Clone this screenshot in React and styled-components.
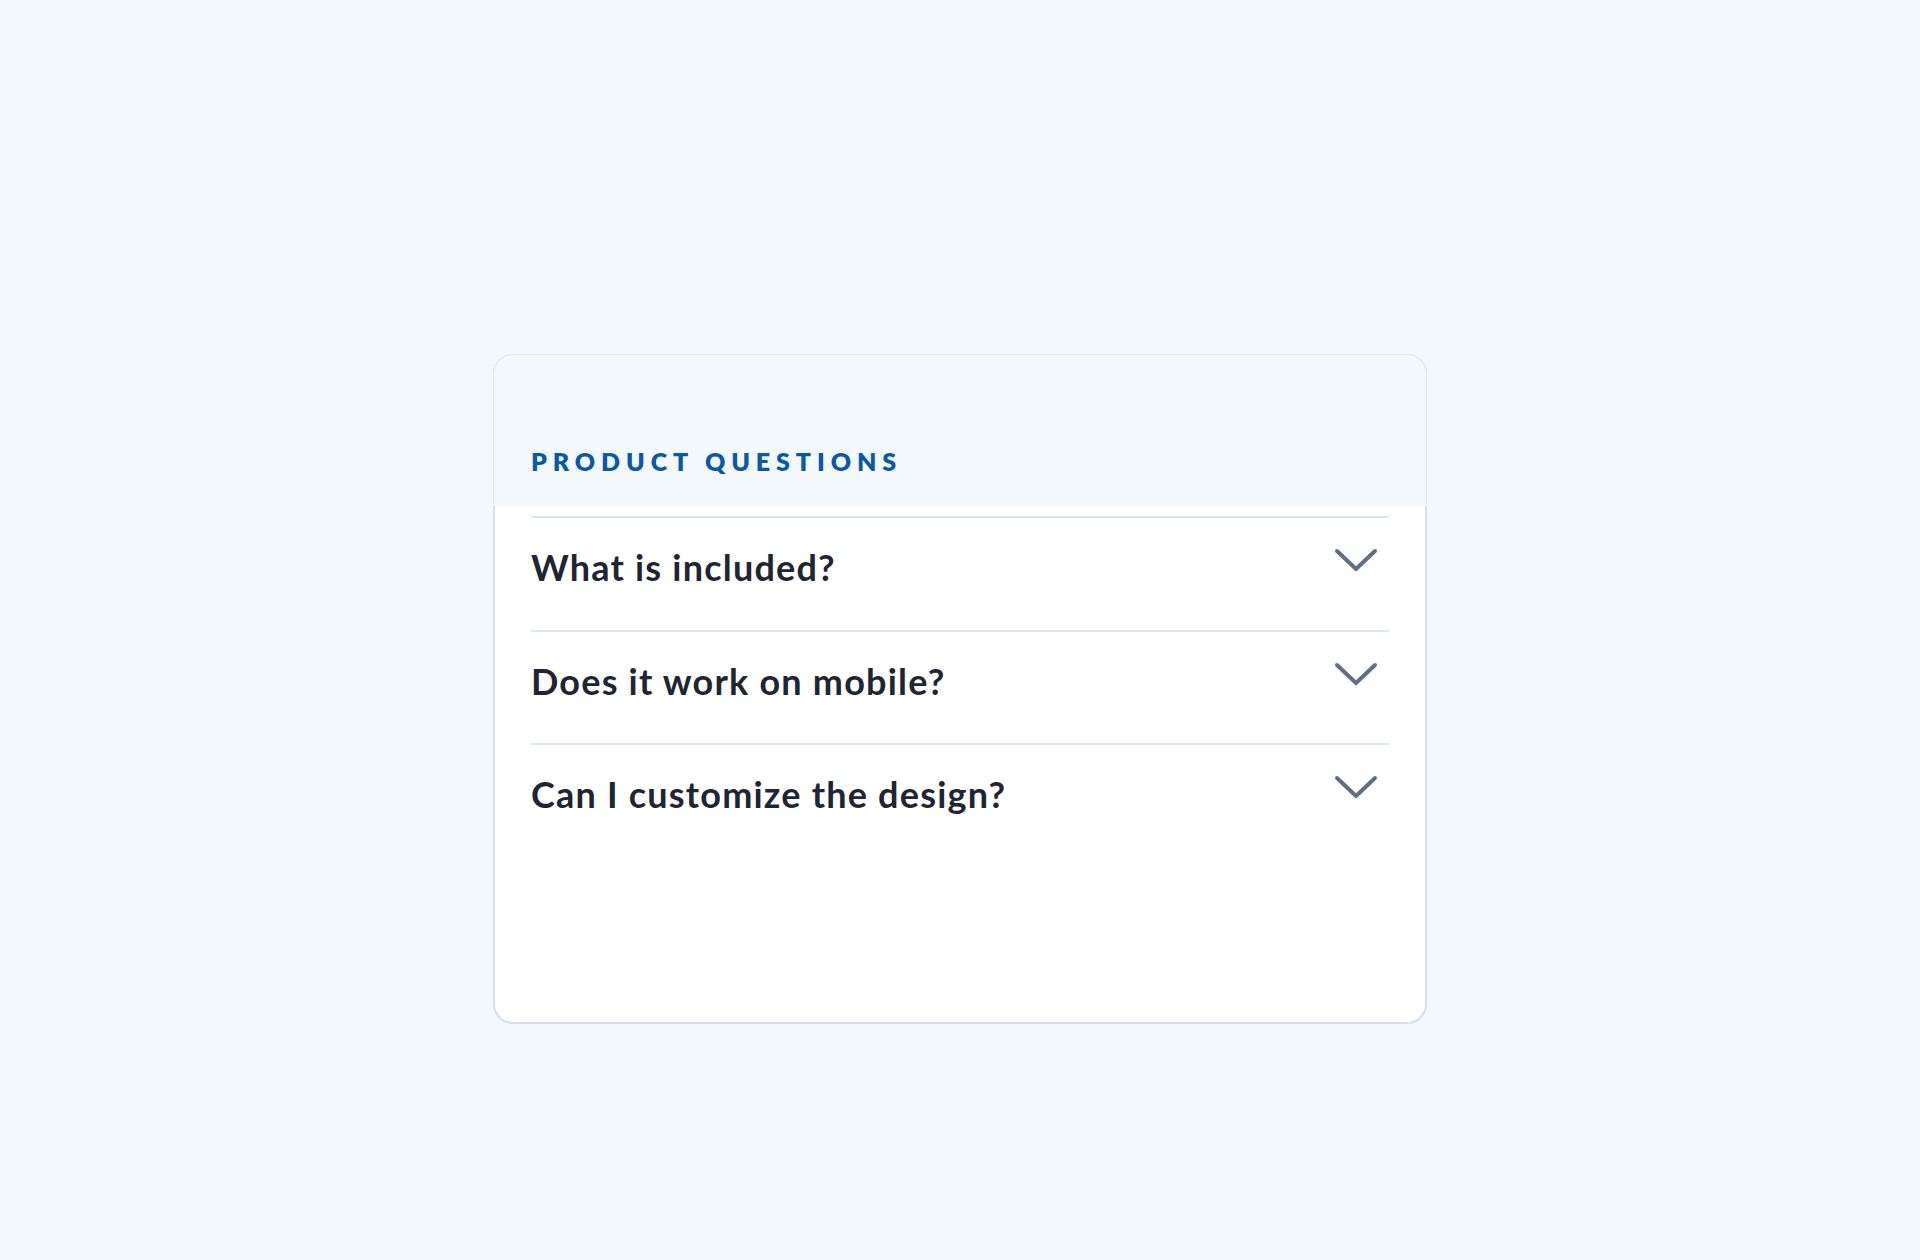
import React from "react";
import styled, { createGlobalStyle } from "styled-components";

const GlobalStyle = createGlobalStyle`
  * { box-sizing: border-box; }
  html, body {
    margin: 0;
    padding: 0;
    background: #f3f8fc;
  }
  body {
    font-family: Lato, "Open Sans", sans-serif;
    -webkit-font-smoothing: antialiased;
  }
`;

const Page = styled.main`
  min-height: 1260px;
  display: flex;
  justify-content: center;
  align-items: flex-start;
  padding-top: 354px;
`;

const Card = styled.section`
  width: 934px;
  height: 670px;
  background: #ffffff;
  border: 2px solid #d5dfe9;
  border-radius: 20px;
  display: flex;
  flex-direction: column;
`;

const Header = styled.header`
  margin: -2px -2px 0;
  height: 152px;
  padding: 91px 37px 0;
  background: #f3f8fc;
  border: 1px solid #dfe7ef;
  border-bottom: none;
  border-radius: 20px 20px 0 0;
`;

const Eyebrow = styled.h2`
  margin: 0;
  font-size: 25px;
  line-height: 1.2;
  font-weight: 800;
  letter-spacing: 5.9px;
  color: #0b58a6;
  text-transform: uppercase;
`;

const List = styled.div`
  padding: 10px 36px 0;
  display: flex;
  flex-direction: column;
`;

const Item = styled.button`
  all: unset;
  box-sizing: border-box;
  cursor: pointer;
  height: 113.5px;
  border-top: 2px solid #dce4ec;
  padding: 28px 11px 0 0;
  display: flex;
  justify-content: space-between;
  align-items: flex-start;
`;

const Question = styled.span`
  font-family: Lato, "Open Sans", sans-serif;
  font-size: 36px;
  line-height: 1.2;
  font-weight: 700;
  letter-spacing: 1.2px;
  color: #1f2532;
`;

const Chevron = styled.svg`
  width: 44px;
  height: 26px;
  margin-top: 1px;
  flex: none;
`;

const ChevronDown = () => (
  <Chevron viewBox="0 0 44 26" aria-hidden="true">
    <polyline
      points="3,4 22,22 41,4"
      fill="none"
      stroke="#627083"
      strokeWidth="4"
      strokeLinecap="round"
      strokeLinejoin="round"
    />
  </Chevron>
);

const questions = [
  "What is included?",
  "Does it work on mobile?",
  "Can I customize the design?",
];

export default function App() {
  return (
    <>
      <GlobalStyle />
      <Page>
        <Card>
          <Header>
            <Eyebrow>Product Questions</Eyebrow>
          </Header>
          <List>
            {questions.map((q) => (
              <Item key={q} type="button">
                <Question>{q}</Question>
                <ChevronDown />
              </Item>
            ))}
          </List>
        </Card>
      </Page>
    </>
  );
}
